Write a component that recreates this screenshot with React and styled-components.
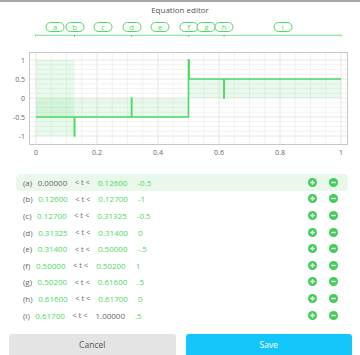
import React, { useState } from "react";
import styled, { createGlobalStyle } from "styled-components";

const GREEN = "#4cd964";
const GRAY_TEXT = "#666";

const segments = [
  { id: "a", from: 0, to: 0.126, value: -0.5, label: "-0.5" },
  { id: "b", from: 0.126, to: 0.127, value: -1, label: "-1" },
  { id: "c", from: 0.127, to: 0.31325, value: -0.5, label: "-0.5" },
  { id: "d", from: 0.31325, to: 0.314, value: 0, label: "0" },
  { id: "e", from: 0.314, to: 0.5, value: -0.5, label: "-.5" },
  { id: "f", from: 0.5, to: 0.502, value: 1, label: "1" },
  { id: "g", from: 0.502, to: 0.616, value: 0.5, label: ".5" },
  { id: "h", from: 0.616, to: 0.617, value: 0, label: "0" },
  { id: "i", from: 0.617, to: 1, value: 0.5, label: ".5" },
];

// chart scale
const X = (v) => 36 + 305 * v;
const Y = (v) => 58 - 38 * v;

const GlobalStyle = createGlobalStyle`
  html, body {
    margin: 0;
    padding: 0;
    background: #fff;
  }
  body {
    font-family: "Open Sans", "Noto Sans", sans-serif;
  }
`;

const Page = styled.div`
  width: 360px;
  height: 355px;
  box-sizing: border-box;
  border-top: 2px solid #a8a8a8;
  display: flex;
  flex-direction: column;
  overflow: hidden;
  background: #fff;
`;

const Title = styled.div`
  height: 16px;
  line-height: 16px;
  text-align: center;
  font-size: 8px;
  color: #555;
`;

const Timeline = styled.div`
  position: relative;
  height: 22px;

  svg {
    display: block;
  }
`;

const Pill = styled.div`
  position: absolute;
  top: 4px;
  width: 17px;
  height: 8px;
  transform: translateX(-50%);
  border: 1px solid ${GREEN};
  border-radius: 5px;
  background: #fff;
  color: ${GREEN};
  font-size: 7.5px;
  line-height: 8px;
  text-align: center;
`;

const Chart = styled.svg`
  display: block;
  flex: none;

  text {
    font-family: "Open Sans", "Noto Sans", sans-serif;
    font-size: 7px;
    fill: ${GRAY_TEXT};
  }
`;

const Table = styled.div`
  margin-top: 12px;
  padding: 0 12px 0 16px;
  display: flex;
  flex-direction: column;
`;

const Row = styled.div`
  height: 16.6px;
  display: flex;
  align-items: center;
  padding: 0 10px 0 7px;
  border-radius: 4px;
  background: ${(p) => (p.$active ? "#eaf8ec" : "transparent")};
  font-size: 8px;
  color: ${GRAY_TEXT};
  cursor: pointer;
`;

const Tag = styled.span`
  margin-right: 5.5px;
`;

const Num = styled.span`
  color: ${(p) => (p.$fixed ? GRAY_TEXT : GREEN)};
`;

const Op = styled.span`
  margin: 0 8px 0 7.5px;
  font-size: 7.5px;
`;

const Val = styled.span`
  margin-left: 10px;
  color: ${GREEN};
`;

const Actions = styled.div`
  margin-left: auto;
  display: flex;
  gap: 12px;

  svg {
    display: block;
  }
`;

const Footer = styled.div`
  margin-top: auto;
  display: flex;
  gap: 10px;
  padding: 0 8px 0 9px;
`;

const Button = styled.button`
  flex: 1;
  height: 21px;
  border: none;
  border-radius: 3px 3px 0 0;
  font-family: "Open Sans", "Noto Sans", sans-serif;
  font-size: 8.5px;
  background: ${(p) => (p.$primary ? "#12c6fc" : "#e4e4e4")};
  color: ${(p) => (p.$primary ? "#fff" : "#555")};
  cursor: pointer;
`;

const PlusIcon = () => (
  <svg width="9" height="9" viewBox="0 0 9 9">
    <circle cx="4.5" cy="4.5" r="4.5" fill="#3fcf57" />
    <path d="M4.5 2.3v4.4M2.3 4.5h4.4" stroke="#fff" strokeWidth="1.4" />
  </svg>
);

const MinusIcon = () => (
  <svg width="9" height="9" viewBox="0 0 9 9">
    <circle cx="4.5" cy="4.5" r="4.5" fill="#3fcf57" />
    <path d="M2.3 4.5h4.4" stroke="#fff" strokeWidth="1.4" />
  </svg>
);

const TimelineBar = () => {
  const ticks = ["b", "d", "f", "h"].map((id) => {
    const s = segments.find((x) => x.id === id);
    return X((s.from + s.to) / 2);
  });
  return (
    <Timeline>
      <svg width="360" height="22">
        <line x1={X(0)} x2={X(1)} y1="17.3" y2="17.3" stroke={GREEN} strokeWidth="0.8" />
        <line x1={X(0) - 0.5} x2={X(0) - 0.5} y1="16.3" y2="18.3" stroke={GREEN} strokeWidth="0.8" />
        <line x1={X(1)} x2={X(1)} y1="16.3" y2="18.3" stroke={GREEN} strokeWidth="0.8" />
        {ticks.map((x) => (
          <line key={x} x1={x} x2={x} y1="17.3" y2="19" stroke={GREEN} strokeWidth="1" />
        ))}
      </svg>
      {segments.map((s) => (
        <Pill key={s.id} style={{ left: X((s.from + s.to) / 2) }}>
          {s.id}
        </Pill>
      ))}
    </Timeline>
  );
};

const StepChart = ({ selected }) => {
  const xMinor = [];
  for (let i = 0; i <= 20; i++) xMinor.push(i / 20);
  const yMinor = [];
  for (let i = -8; i <= 8; i++) yMinor.push(i / 8);

  let d = `M${X(0)} ${Y(segments[0].value)}`;
  segments.forEach((s) => {
    d += ` V${Y(s.value)} H${X(s.to)}`;
  });

  const sel = segments.find((s) => s.id === selected);

  return (
    <Chart width="360" height="122">
      <rect x="29.5" y="12.5" width="318" height="92" fill="none" stroke="#c8c8c8" />
      {xMinor.map((v) => (
        <line
          key={"x" + v}
          x1={X(v)}
          x2={X(v)}
          y1="13"
          y2="104"
          stroke={Math.round(v * 100) % 20 === 0 ? "#dedede" : "#efefef"}
          strokeWidth="0.8"
        />
      ))}
      {yMinor.map((v) => (
        <line
          key={"y" + v}
          x1="30"
          x2="347"
          y1={Y(v)}
          y2={Y(v)}
          stroke={Math.round(v * 8) % 4 === 0 ? "#e2e2e2" : "#f0f0f0"}
          strokeWidth="0.8"
        />
      ))}
      {segments.map((s) => (
        <rect
          key={"f" + s.id}
          x={X(s.from)}
          width={X(s.to) - X(s.from)}
          y={Math.min(Y(s.value), Y(0))}
          height={Math.abs(Y(s.value) - Y(0))}
          fill="rgba(76, 217, 100, 0.12)"
        />
      ))}
      {sel && (
        <rect
          x={X(sel.from)}
          width={X(sel.to) - X(sel.from)}
          y={Y(1)}
          height={Y(-1) - Y(1)}
          fill="rgba(76, 217, 100, 0.13)"
        />
      )}
      <path d={d} fill="none" stroke={GREEN} strokeWidth="1.6" />
      {[1, 0.5, 0, -0.5, -1].map((v) => (
        <text key={"yl" + v} x="25" y={Y(v) + 2.5} textAnchor="end">
          {v}
        </text>
      ))}
      {[0, 0.2, 0.4, 0.6, 0.8, 1].map((v) => (
        <text key={"xl" + v} x={X(v)} y="114.5" textAnchor="middle">
          {v}
        </text>
      ))}
    </Chart>
  );
};

const App = () => {
  const [selected, setSelected] = useState("a");

  return (
    <>
      <GlobalStyle />
      <Page>
        <Title>Equation editor</Title>
        <TimelineBar />
        <StepChart selected={selected} />
        <Table>
          {segments.map((s, i) => (
            <Row key={s.id} $active={s.id === selected} onClick={() => setSelected(s.id)}>
              <Tag>({s.id})</Tag>
              <Num $fixed={i === 0}>{s.from.toFixed(5)}</Num>
              <Op>&lt; t &lt;</Op>
              <Num $fixed={i === segments.length - 1}>{s.to.toFixed(5)}</Num>
              <Val>{s.label}</Val>
              <Actions>
                <PlusIcon />
                <MinusIcon />
              </Actions>
            </Row>
          ))}
        </Table>
        <Footer>
          <Button>Cancel</Button>
          <Button $primary>Save</Button>
        </Footer>
      </Page>
    </>
  );
};

export default App;
